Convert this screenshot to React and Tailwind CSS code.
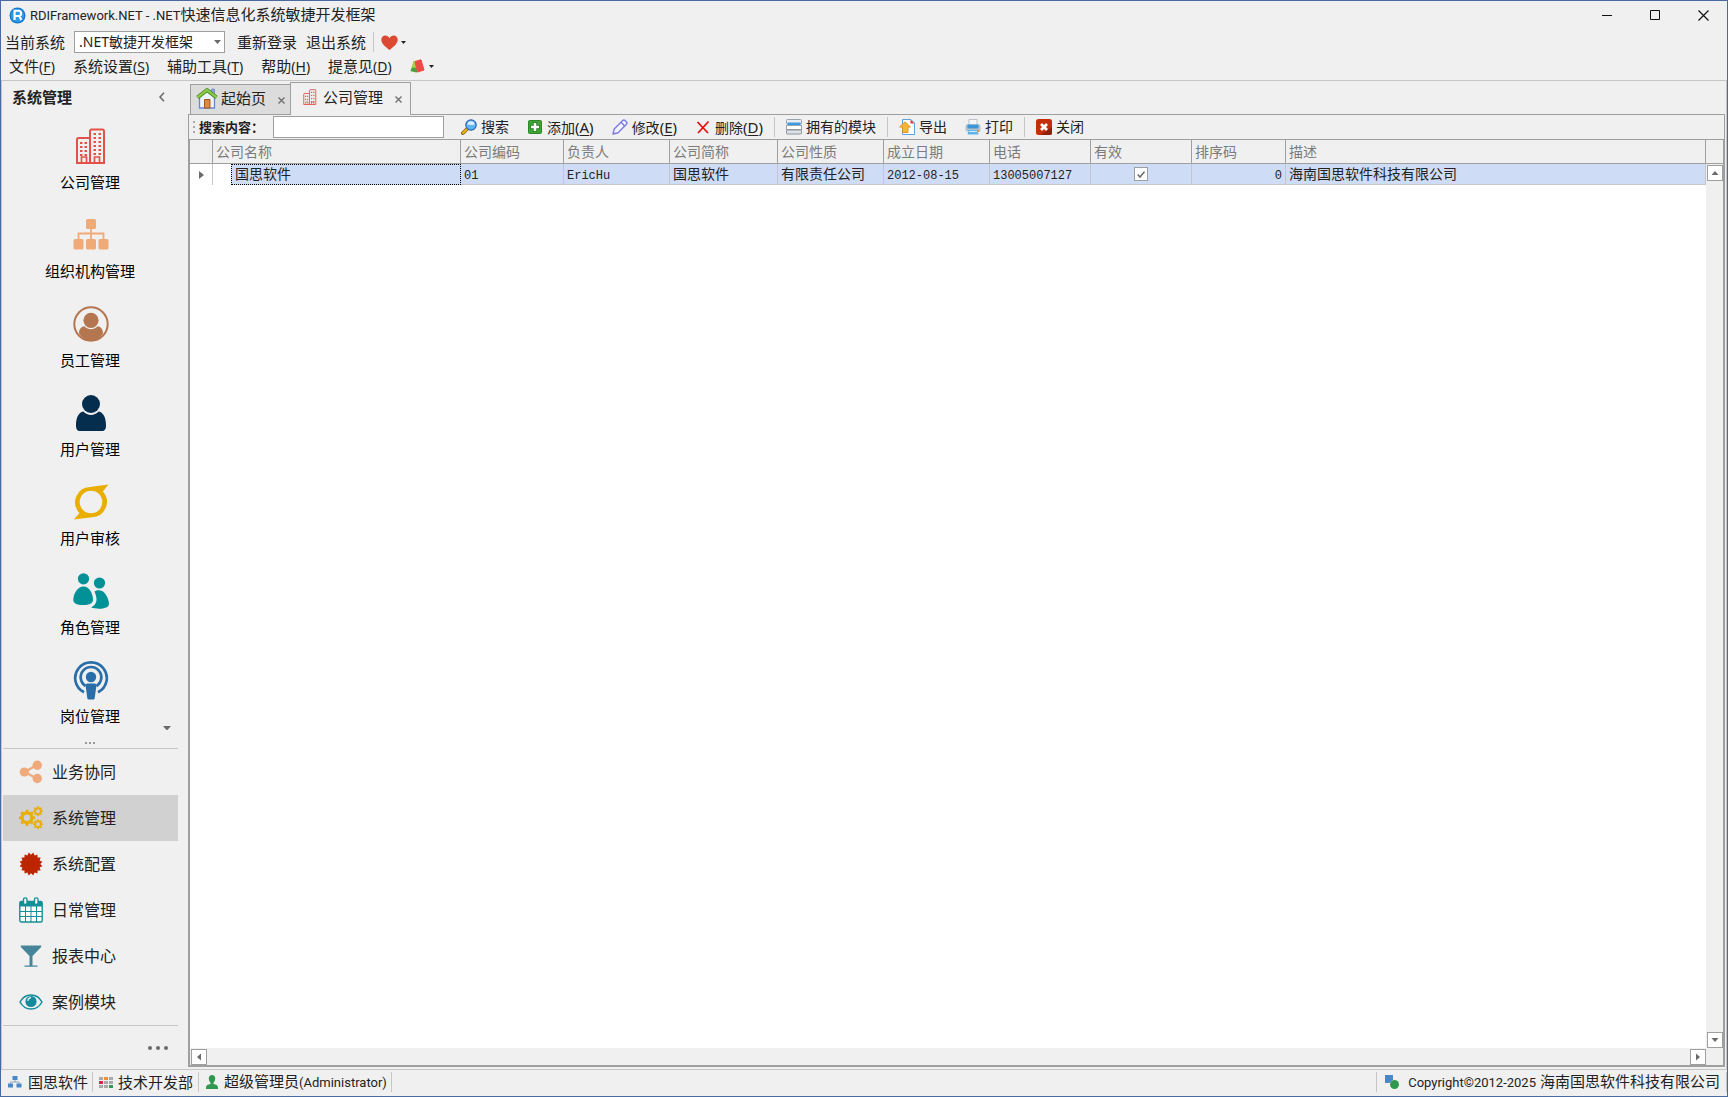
import React from "react";

/* ---------- small shared pieces ---------- */

function Caret({ width = 5, className = "" }) {
  return (
    <svg width={width} height={(width + 1) / 2} viewBox="0 0 6 4" preserveAspectRatio="none" className={"shrink-0 " + className} fill="currentColor">
      <path d="M0 0h6L3 4z" />
    </svg>
  );
}

function Sep({ className = "" }) {
  return <span className={"w-px shrink-0 bg-[#c6c6c6] " + className} />;
}

function Key({ letter, className = "text-sm" }) {
  return (
    <span className={className}>
      (<span className="underline underline-offset-2">{letter}</span>)
    </span>
  );
}

/* ---------- icons ---------- */

function LogoIcon() {
  return (
    <svg width="17" height="17" viewBox="0 0 17 17" className="shrink-0">
      <circle cx="8.5" cy="8.5" r="8" fill="#1479c8" />
      <circle cx="8.5" cy="8.5" r="6.6" fill="#2f9be6" />
      <path d="M5.6 13V3.8h3.7a2.6 2.6 0 0 1 .9 5.1l2.1 4.1M5.6 9h3.6" fill="none" stroke="#fff" strokeWidth="2.1" />
    </svg>
  );
}

function BuildingIcon({ size = 36 }) {
  const small = size < 20;
  const dots = [];
  const leftRows = small ? [15, 22] : [14, 18, 22, 26];
  const rightRows = small ? [6, 13, 20, 27] : [5, 9, 13, 17, 21, 25];
  for (const y of leftRows) for (const x of [7, 11.5]) dots.push([x, y]);
  for (const y of rightRows) for (const x of [20.5, 25.5]) dots.push([x, y]);
  return (
    <svg width={size} height={size} viewBox="0 0 36 36" className="shrink-0">
      <g fill="none" stroke="#e55048" strokeWidth="2">
        <path d="M17 10H5.500A1.500 1.500 0 0 0 4 11.500V35h27V3a1.500 1.500 0 0 0-1.500-1.500h-11A1.500 1.500 0 0 0 17 3v32" />
        <path d="M8.500 35v-6h5v6M21.500 35v-6h5v6" strokeWidth="1.700" />
      </g>
      {dots.map(([x, y]) => (
        <rect key={x + "-" + y} x={x} y={y} width="2.500" height={small ? 3 : 2} fill="#e55048" />
      ))}
    </svg>
  );
}

function OrgIcon() {
  return (
    <svg width="36" height="36" viewBox="0 0 36 36">
      <g fill="#efaa78">
        <rect x="13" y="2" width="10" height="10" rx="1.500" />
        <rect x="0.500" y="22" width="10" height="10.500" rx="1.500" />
        <rect x="13" y="22" width="10" height="10.500" rx="1.500" />
        <rect x="25.500" y="22" width="10" height="10.500" rx="1.500" />
      </g>
      <path d="M18 12v10M5.500 22v-5.500h25V22" fill="none" stroke="#efaa78" strokeWidth="1.800" />
    </svg>
  );
}

function EmployeeIcon() {
  return (
    <svg width="36" height="36" viewBox="0 0 36 36">
      <circle cx="18" cy="18" r="16.700" fill="none" stroke="#b4764f" strokeWidth="2" />
      <circle cx="18" cy="14.300" r="7.600" fill="#b4764f" />
      <path d="M6 27.500c0-4 2-7 5.300-7.300 4 4 9.400 4 13.400 0 3.300.3 5.300 3.300 5.300 7.300A16.500 16.500 0 0 1 18 35 16.500 16.500 0 0 1 6 27.500z" fill="#b4764f" />
    </svg>
  );
}

function UserIcon() {
  return (
    <svg width="36" height="38" viewBox="0 0 36 38">
      <circle cx="18" cy="10" r="9" fill="#042d4e" />
      <path d="M10.300 17.500c4.300 4.600 11.100 4.600 15.400 0C30.600 18.500 33 24 33 31.500c0 4-1.500 5.500-4 5.500H7c-2.500 0-4-1.500-4-5.500 0-7.500 2.400-13 7.300-14z" fill="#042d4e" />
    </svg>
  );
}

function AuditIcon() {
  return (
    <svg width="36" height="36" viewBox="0 0 36 36">
      <path
        fillRule="evenodd"
        fill="#e9ae00"
        d="M35.500.5 29.800 7.500A15.300 15.300 0 0 1 19 33.200L.8 35.500 6.500 29A15.300 15.300 0 0 1 17 3zM18 6.700a11.300 11.300 0 1 0 0 22.600 11.300 11.300 0 0 0 0-22.600z"
      />
    </svg>
  );
}

function RoleIcon() {
  return (
    <svg width="36" height="36" viewBox="0 0 36 36" fill="#029196">
      <circle cx="10.500" cy="5.800" r="5.600" />
      <circle cx="26.500" cy="10" r="5.600" />
      <path d="M10.500 13.500c6 0 9.500 7.500 9.500 13.500 0 3-3.500 5-10 5S.3 30 .3 27c0-6 4.200-13.500 10.200-13.500z" />
      <path d="M21.500 18.500c3-2.200 8-1.700 10.500 2 2.500 3.300 4 7.500 4 10.500 0 5-11.500 6-18 3.300 5-2 7.500-7 3.500-15.800z" />
    </svg>
  );
}

function PostIcon() {
  return (
    <svg width="36" height="40" viewBox="0 0 36 40">
      <g fill="none" stroke="#296da9" strokeWidth="2.700">
        <path d="M11 32.300a15.800 15.800 0 1 1 14 0" />
        <path d="M12.500 26a10.300 10.300 0 1 1 11 0" />
      </g>
      <circle cx="18" cy="17" r="5.200" fill="#296da9" />
      <path d="M14.500 23.500h7c1.500 0 2 1 1.900 2.500L21.700 38c-.2 1.200-.7 1.600-1.700 1.600h-4c-1 0-1.500-.4-1.700-1.600L12.600 26c-.1-1.500.4-2.500 1.900-2.500z" fill="#296da9" />
    </svg>
  );
}

function ShareIcon() {
  return (
    <svg width="24" height="24" viewBox="0 0 24 24" fill="#efa97b">
      <circle cx="5.300" cy="12" r="4.600" />
      <circle cx="18.300" cy="5.200" r="4.700" />
      <circle cx="18.300" cy="18.500" r="4.700" />
      <path d="M18 5 5.500 12 18 18.500" fill="none" stroke="#efa97b" strokeWidth="2.200" />
    </svg>
  );
}

function Gear({ cx, cy, hole, inner, outer }) {
  const pts = [];
  for (let i = 0; i < 8; i++) {
    for (const [off, r] of [[-0.3, inner], [-0.2, outer], [0.2, outer], [0.3, inner]]) {
      const a = ((i + off) * Math.PI) / 4;
      pts.push((cx + r * Math.cos(a)).toFixed(2) + " " + (cy + r * Math.sin(a)).toFixed(2));
    }
  }
  const ring =
    "M" + (cx - hole) + " " + cy + "a" + hole + " " + hole + " 0 1 0 " + 2 * hole + " 0a" + hole + " " + hole + " 0 1 0 " + -2 * hole + " 0z";
  return <path fillRule="evenodd" fill="#e8ae09" d={"M" + pts.join("L") + "z" + ring} />;
}

function GearsIcon() {
  return (
    <svg width="24" height="24" viewBox="0 0 24 24">
      <Gear cx={8} cy={11.800} hole={3.300} inner={6.500} outer={8.200} />
      <Gear cx={19} cy={5.200} hole={1.900} inner={3.900} outer={5} />
      <Gear cx={19} cy={18.200} hole={1.900} inner={3.900} outer={5} />
    </svg>
  );
}

function BurstIcon() {
  const pts = [];
  for (let i = 0; i < 32; i++) {
    const r = i % 2 ? 9.3 : 11.6;
    const a = (Math.PI * i) / 16 + Math.PI / 16;
    pts.push((12 + r * Math.sin(a)).toFixed(1) + "," + (12 - r * Math.cos(a)).toFixed(1));
  }
  return (
    <svg width="24" height="24" viewBox="0 0 24 24">
      <polygon points={pts.join(" ")} fill="#bd2500" />
    </svg>
  );
}

function CalendarIcon() {
  return (
    <svg width="24" height="26" viewBox="0 0 24 26">
      <rect x="0.800" y="4.500" width="22.400" height="20.500" rx="1.500" fill="#fff" stroke="#138f96" strokeWidth="1.400" />
      <path d="M1 5h22v4.500H1z" fill="#138f96" />
      <path d="M1 14.500h22M1 19.500h22M6.500 9v16M12 9v16M17.500 9v16" stroke="#138f96" strokeWidth="1" />
      <rect x="4.500" y="0.800" width="3.500" height="6.500" rx="1.500" fill="#f0f0f0" stroke="#138f96" strokeWidth="1.300" />
      <rect x="15.500" y="0.800" width="3.500" height="6.500" rx="1.500" fill="#f0f0f0" stroke="#138f96" strokeWidth="1.300" />
    </svg>
  );
}

function GlassIcon() {
  return (
    <svg width="24" height="24" viewBox="0 0 24 24">
      <path d="M1.800 1.500h20.400V3L13.500 12v9.500h5v1.300h-13v-1.300h5V12L1.800 3z" fill="#468599" />
    </svg>
  );
}

function EyeIcon() {
  return (
    <svg width="24" height="16" viewBox="0 0 24 16">
      <path d="M1 8C6-1.300 18-1.300 23 8 18 17.300 6 17.300 1 8z" fill="#f0f0f0" stroke="#138b9c" strokeWidth="1.500" />
      <circle cx="12" cy="7.500" r="5.600" fill="#138b9c" />
      <path d="M8.800 6.800c.3-2 1.400-3 3.200-3.300" fill="none" stroke="#d8edf0" strokeWidth="1.300" />
    </svg>
  );
}

function HomeIcon() {
  return (
    <svg width="22" height="22" viewBox="0 0 22 22" className="shrink-0">
      <path d="M15.500 2h3v6h-3z" fill="#8ba3de" stroke="#5b78c4" strokeWidth=".6" />
      <path d="M3.500 10 11 4l7.500 6v11h-15z" fill="#eef4fd" stroke="#6d86cc" strokeWidth="1.300" />
      <path d="M8.500 12.500h5.500V21H8.500z" fill="#e08b3c" stroke="#a6541b" strokeWidth="1" />
      <path d="M1.500 10.500 11 3l9.500 7.500" fill="none" stroke="#4c8a1c" strokeWidth="4" strokeLinejoin="round" />
      <path d="M1.500 10.300 11 2.800l9.500 7.500" fill="none" stroke="#8ccb4a" strokeWidth="2.200" strokeLinejoin="round" />
    </svg>
  );
}

function SearchIcon() {
  return (
    <svg width="16" height="16" viewBox="0 0 16 16">
      <path d="M6 10 1.800 14.200" stroke="#8a6400" strokeWidth="3.600" strokeLinecap="round" />
      <path d="M6 10 2 14" stroke="#e8b31c" strokeWidth="2.200" strokeLinecap="round" />
      <circle cx="10" cy="6" r="5.200" fill="#5fb6f7" stroke="#2b62b4" strokeWidth="1.200" />
      <path d="M6.500 6a3.500 3.500 0 0 1 7-.5c-2 1.300-4.500-.5-7 .5z" fill="#d6effe" />
    </svg>
  );
}

function AddIcon() {
  return (
    <svg width="16" height="16" viewBox="0 0 16 16">
      <rect x="1.500" y="1.500" width="13" height="13" rx="1" fill="#3da535" stroke="#2c8a26" />
      <path d="M8 3.500v9M3.500 8h9" stroke="#1e6f1b" strokeWidth="4.200" />
      <path d="M8 4v8M4 8h8" stroke="#fff" strokeWidth="2.600" />
    </svg>
  );
}

function PencilIcon() {
  return (
    <svg width="16" height="16" viewBox="0 0 16 16" fill="none" stroke="#7d7be0" strokeWidth="1.400" strokeLinejoin="round">
      <path d="M1 15l1.200-5L10.500 1.700a2 2 0 0 1 2.800 0l1 1a2 2 0 0 1 0 2.800L6 13.800z" fill="#f3f3ff" />
      <path d="M9 3.300l3.700 3.700" />
    </svg>
  );
}

function DeleteIcon() {
  return (
    <svg width="16" height="16" viewBox="0 0 16 16">
      <path d="M2.500 3 13 14M13.500 2.500 3 14" stroke="#e01212" strokeWidth="1.800" />
    </svg>
  );
}

function ModulesIcon() {
  return (
    <svg width="16" height="16" viewBox="0 0 16 16">
      <rect x="0.500" y="0.500" width="15" height="4.500" rx="1" fill="#e8edf1" stroke="#9aa3ab" />
      <rect x="1.500" y="3.500" width="13" height="3" fill="#3a9be0" />
      <rect x="0.500" y="6.500" width="15" height="4" fill="#fff" stroke="#9aa3ab" />
      <rect x="0.500" y="11" width="15" height="4" rx="1" fill="#dde2e6" stroke="#8a939b" />
    </svg>
  );
}

function ExportIcon() {
  return (
    <svg width="16" height="16" viewBox="0 0 16 16">
      <path d="M3.500.5H12L15.500 4v11.500h-12z" fill="#fff" stroke="#5aa3dc" />
      <path d="M11.500.5 15.500 4.500h-4z" fill="#e23c2c" />
      <path d="M6 2.800 11.500 8H9v5.500H3.500V8H.6z" fill="#f9b635" stroke="#d58a12" strokeWidth=".8" />
    </svg>
  );
}

function PrintIcon() {
  return (
    <svg width="16" height="16" viewBox="0 0 16 16">
      <path d="M4 .5h8V7H4z" fill="#f4f6f8" stroke="#aeb6bd" strokeWidth=".8" />
      <rect x="0.500" y="5.500" width="15" height="7" rx="1.500" fill="#b9c2c9" />
      <path d="M2.500 5.500h11v4h-11z" fill="#3d97d6" />
      <path d="M3.500 11h9l1 4.500h-11z" fill="#5db4e8" />
      <path d="M4 12.500h8" stroke="#d8eefa" />
      <circle cx="13.500" cy="12" r=".9" fill="#e8862a" />
    </svg>
  );
}

function CloseBoxIcon() {
  return (
    <svg width="16" height="16" viewBox="0 0 16 16">
      <rect width="16" height="16" rx="2.500" fill="#c52e0b" />
      <path d="M4.500 16h9A2.500 2.500 0 0 0 16 13.500V8z" fill="#8f1f08" />
      <path d="M5 5l6 6M11 5l-6 6" stroke="#fff" strokeWidth="2.800" />
    </svg>
  );
}

function TabX() {
  return (
    <svg width="7" height="7" viewBox="0 0 7 7">
      <path d="M.5.500l6 6M6.500.500l-6 6" stroke="#707070" strokeWidth="1.400" />
    </svg>
  );
}

/* ---------- header ---------- */

function TitleBar() {
  return (
    <header className="flex h-7 items-center pl-2">
      <LogoIcon />
      <h1 className="ml-1 flex items-baseline whitespace-pre leading-5">
        <span className="font-['Roboto'] text-[13px]">RDIFramework.NET - .NET</span>
        <span className="text-[15px]">快速信息化系统敏捷开发框架</span>
      </h1>
      <div className="ml-auto flex items-center">
        <button aria-label="最小化" className="flex h-7 w-12 items-center justify-center">
          <svg width="10" height="10" viewBox="0 0 10 10"><path d="M0 5.500h10" stroke="#111" /></svg>
        </button>
        <button aria-label="最大化" className="flex h-7 w-12 items-center justify-center">
          <svg width="10" height="10" viewBox="0 0 10 10"><path d="M.5.500h9v9h-9z" fill="none" stroke="#111" /></svg>
        </button>
        <button aria-label="关闭窗口" className="flex h-7 w-12 items-center justify-center">
          <svg width="11" height="11" viewBox="0 0 11 11"><path d="M.5.500l10 10M10.500.500l-10 10" stroke="#111" strokeWidth="1.200" /></svg>
        </button>
      </div>
    </header>
  );
}

function SystemBar() {
  return (
    <div className="flex h-[26px] items-center pl-1 text-[15px] leading-5">
      <label htmlFor="system">当前系统</label>
      <div className="relative ml-[9px] flex items-center">
        <select id="system" className="h-[22px] w-[151px] appearance-none border border-[#9f9f9f] bg-white pl-1 text-sm leading-5">
          <option>.NET敏捷开发框架</option>
        </select>
        <Caret width={7} className="pointer-events-none absolute right-1 text-[#6a6a6a]" />
      </div>
      <button className="ml-3">重新登录</button>
      <button className="ml-[9px]">退出系统</button>
      <Sep className="ml-[7px] h-5" />
      <button aria-label="收藏" className="ml-[7px] flex items-center gap-[3px]">
        <svg width="17" height="15" viewBox="0 0 17 15">
          <path d="M8.500 15C5 12 .3 9 .3 4.700.3 2.200 2 .5 4.300.5c1.800 0 3.300 1 4.200 2.700C9.400 1.500 10.900.5 12.700.5c2.300 0 4 1.700 4 4.200C16.700 9 12 12 8.500 15z" fill="#dc4a33" />
        </svg>
        <Caret />
      </button>
    </div>
  );
}

const MENUS = [
  ["文件", "F"],
  ["系统设置", "S"],
  ["辅助工具", "T"],
  ["帮助", "H"],
  ["提意见", "D"],
];

function MenuBar() {
  return (
    <nav className="flex h-[25px] items-center gap-[18px] pb-[3px] pl-2 text-[15px] leading-5">
      {MENUS.map(([t, k]) => (
        <button key={k} className="flex items-baseline">
          {t}
          <Key letter={k} />
        </button>
      ))}
      <button aria-label="皮肤" className="flex items-center gap-1">
        <svg width="15" height="14" viewBox="0 0 15 14">
          <path d="M3.500 1.500 9 5 6.500 13.500.5 12z" fill="#a3d24b" />
          <path d="M2 8.500 8 9l-1.500 4.500-6-1.500z" fill="#49a043" />
          <path d="M5 2.500 11 .8 14 11 7.500 13z" fill="#ee4a45" stroke="#ee4a45" strokeLinejoin="round" />
        </svg>
        <Caret />
      </button>
    </nav>
  );
}

/* ---------- sidebar ---------- */

const MODULES = [
  ["公司管理", BuildingIcon],
  ["组织机构管理", OrgIcon],
  ["员工管理", EmployeeIcon],
  ["用户管理", UserIcon],
  ["用户审核", AuditIcon],
  ["角色管理", RoleIcon],
  ["岗位管理", PostIcon],
];

const GROUPS = [
  ["业务协同", ShareIcon],
  ["系统管理", GearsIcon],
  ["系统配置", BurstIcon],
  ["日常管理", CalendarIcon],
  ["报表中心", GlassIcon],
  ["案例模块", EyeIcon],
];

function Sidebar() {
  return (
    <aside className="flex w-[187px] shrink-0 flex-col border-l border-[#c6c6c6] pr-[10px]">
      <div className="flex h-8 shrink-0 items-center justify-between pl-[10px] pr-[13px]">
        <h2 className="text-[15px] font-bold leading-5">系统管理</h2>
        <button aria-label="折叠">
          <svg width="6" height="10" viewBox="0 0 6 10"><path d="M5 .8 1 5l4 4.200" fill="none" stroke="#666" strokeWidth="1.500" /></svg>
        </button>
      </div>
      <div className="relative flex flex-1 flex-col overflow-hidden pt-[13px]">
        {MODULES.map(([label, Icon]) => (
          <button key={label} className="mb-[23px] flex shrink-0 flex-col items-center gap-[6px] text-[15px] leading-5 text-black">
            <span className="flex h-10 items-center pl-[2px]">
              <Icon />
            </span>
            {label}
          </button>
        ))}
        <Caret width={8} className="absolute bottom-[18px] right-[7px] text-[#6a6a6a]" />
        <span className="absolute bottom-1 left-1/2 flex -translate-x-1/2 gap-0.5">
          <i className="h-0.5 w-0.5 bg-[#999]" />
          <i className="h-0.5 w-0.5 bg-[#999]" />
          <i className="h-0.5 w-0.5 bg-[#999]" />
        </span>
      </div>
      <nav className="ml-px border-y border-[#c6c6c6]">
        {GROUPS.map(([label, Icon], i) => (
          <button
            key={label}
            className={"flex h-[46px] w-full items-center gap-[9px] pl-4 text-base leading-5 " + (i === 1 ? "bg-[#d1d1d1]" : "")}
          >
            <span className="flex w-6 justify-center">
              <Icon />
            </span>
            {label}
          </button>
        ))}
      </nav>
      <div className="flex h-[43px] items-center justify-end pr-[10px]">
        <button aria-label="更多" className="flex gap-1">
          <i className="h-1 w-1 rounded-full bg-[#6c6c6c]" />
          <i className="h-1 w-1 rounded-full bg-[#6c6c6c]" />
          <i className="h-1 w-1 rounded-full bg-[#6c6c6c]" />
        </button>
      </div>
    </aside>
  );
}

/* ---------- main area ---------- */

function Tabs() {
  return (
    <div className="flex h-[34px] items-end">
      <div className="w-[2px] self-stretch border-b border-[#9f9f9f]" />
      <div className="flex h-[31px] w-[100px] items-center border border-r-0 border-[#9f9f9f] bg-[#dcdcdc] px-[5px] pb-[3px]">
        <button className="flex items-center gap-[3px] text-[15px] leading-5">
          <HomeIcon />
          起始页
        </button>
        <button aria-label="关闭起始页" className="ml-auto pt-1"><TabX /></button>
      </div>
      <div className="flex h-[33px] w-[121px] items-center border border-b-0 border-[#9f9f9f] pb-1 pl-[11px] pr-2">
        <button className="flex items-center gap-[5px] text-[15px] leading-5">
          <BuildingIcon size={16} />
          公司管理
        </button>
        <button aria-label="关闭公司管理" className="ml-auto pt-1"><TabX /></button>
      </div>
      <div className="flex-1 self-stretch border-b border-[#9f9f9f]" />
    </div>
  );
}

function Tool({ icon: Icon, label, k }) {
  return (
    <button className="flex shrink-0 items-center gap-1 px-[9px] text-sm leading-5">
      <Icon />
      <span className="flex items-baseline">
        {label}
        {k && <Key letter={k} className="text-[15px]" />}
      </span>
    </button>
  );
}

function Toolbar() {
  return (
    <div className="flex h-[25px] items-center border-b border-[#9f9f9f] pl-1">
      <span className="flex flex-col gap-[3px]">
        <i className="h-0.5 w-0.5 bg-[#aaa]" />
        <i className="h-0.5 w-0.5 bg-[#aaa]" />
        <i className="h-0.5 w-0.5 bg-[#aaa]" />
      </span>
      <label htmlFor="query" className="ml-1 w-[74px] text-[13px] font-bold leading-5">搜索内容：</label>
      <input id="query" className="h-[22px] w-[171px] border border-[#9f9f9f] bg-white px-1 text-sm" />
      <div className="ml-2 flex items-center">
        <Tool icon={SearchIcon} label="搜索" />
        <Tool icon={AddIcon} label="添加" k="A" />
        <Tool icon={PencilIcon} label="修改" k="E" />
        <Tool icon={DeleteIcon} label="删除" k="D" />
        <Sep className="mx-0.5 h-5" />
        <Tool icon={ModulesIcon} label="拥有的模块" />
        <Sep className="mx-0.5 h-5" />
        <Tool icon={ExportIcon} label="导出" />
        <Tool icon={PrintIcon} label="打印" />
        <Sep className="mx-0.5 h-5" />
        <Tool icon={CloseBoxIcon} label="关闭" />
      </div>
    </div>
  );
}

function ScrollButton({ label, d, className = "" }) {
  return (
    <button aria-label={label} className={"flex h-4 w-4 shrink-0 items-center justify-center border border-[#9f9f9f] bg-white " + className}>
      <svg width="8" height="8" viewBox="0 0 8 8"><path d={d} fill="#6a6a6a" /></svg>
    </button>
  );
}

const HEADS = ["公司名称", "公司编码", "负责人", "公司简称", "公司性质", "成立日期", "电话", "有效", "排序码", "描述"];

function Mono({ children }) {
  return <span className="font-['Liberation_Mono','Noto_Sans_CJK_SC',monospace] text-xs leading-none">{children}</span>;
}

function CompanyTable() {
  const cell = "border-r border-b border-[#c6c6c6] px-[3px] py-0";
  return (
    <table className="w-full table-fixed border-separate border-spacing-0 whitespace-nowrap text-sm leading-5">
      <colgroup>
        <col className="w-[23px]" />
        <col className="w-[248px]" />
        <col className="w-[103px]" />
        <col className="w-[106px]" />
        <col className="w-[108px]" />
        <col className="w-[106px]" />
        <col className="w-[106px]" />
        <col className="w-[101px]" />
        <col className="w-[101px]" />
        <col className="w-[94px]" />
        <col />
      </colgroup>
      <thead>
        <tr className="h-6 bg-[#f0f0f0]">
          <th className="border-r border-b border-[#9f9f9f] p-0" />
          {HEADS.map((h) => (
            <th key={h} className="border-r border-b border-[#9f9f9f] px-[3px] py-0 text-left font-normal text-[#7b7b7b]">{h}</th>
          ))}
        </tr>
      </thead>
      <tbody>
        <tr className="h-[21px] bg-[#cfdcf5]">
          <td className="border-r border-[#c6c6c6] bg-white p-0">
            <svg width="5" height="8" viewBox="0 0 5 8" className="ml-[9px]"><path d="M0 0l5 4-5 4z" fill="#6a6a6a" /></svg>
          </td>
          <td className="bg-white p-0 pl-[18px]">
            <div className="h-[21px] border border-dotted border-black bg-[#cfdcf5] pl-[3px] leading-[18px]">国思软件</div>
          </td>
          <td className={cell}><Mono>01</Mono></td>
          <td className={cell}><Mono>EricHu</Mono></td>
          <td className={cell}>国思软件</td>
          <td className={cell}>有限责任公司</td>
          <td className={cell}><Mono>2012-08-15</Mono></td>
          <td className={cell}><Mono>13005007127</Mono></td>
          <td className={cell}>
            <span className="relative mx-auto flex h-[14px] w-[14px] items-center justify-center">
              <input type="checkbox" aria-label="有效" defaultChecked className="h-[14px] w-[14px] appearance-none border border-[#9f9f9f] bg-white" />
              <svg width="8" height="7" viewBox="0 0 8 7" className="pointer-events-none absolute"><path d="M.7 3.500 3 6 7.500.7" fill="none" stroke="#6a6a6a" strokeWidth="1.600" /></svg>
            </span>
          </td>
          <td className={cell + " text-right"}><Mono>0</Mono></td>
          <td className={cell}>海南国思软件科技有限公司</td>
        </tr>
      </tbody>
    </table>
  );
}

function DataGrid() {
  return (
    <div className="flex min-h-0 flex-1 flex-col border-r border-l border-[#9f9f9f]">
      <div className="flex min-h-0 flex-1">
        <div className="min-w-0 flex-1 overflow-hidden bg-white">
          <CompanyTable />
        </div>
        <div className="flex w-[17px] flex-col items-center bg-[#f0f0f0]">
          <div className="h-6 w-full shrink-0 border-b border-[#9f9f9f]" />
          <ScrollButton label="向上滚动" d="M4 2 7.500 6h-7z" className="mt-px" />
          <div className="flex-1" />
          <ScrollButton label="向下滚动" d="M4 6 .5 2h7z" />
        </div>
      </div>
      <div className="flex h-[17px] items-center pl-px pr-[17px]">
        <ScrollButton label="向左滚动" d="M2 4 6 .5v7z" />
        <div className="flex-1" />
        <ScrollButton label="向右滚动" d="M6 4 2 .5v7z" />
      </div>
    </div>
  );
}

/* ---------- status bar ---------- */

function StatusBar() {
  return (
    <footer className="flex h-[27px] items-center border-t border-[#c6c6c6] pb-0.5 pl-[7px] text-[15px] leading-5">
      <svg width="14" height="12" viewBox="0 0 14 12">
        <path d="M4.500 0h5v4h-5zM0 7.500h5v4H0zM8.500 7.500h5v4h-5z" fill="#4b86c6" />
        <path d="M7 4v2M2.500 7.500V6h8.500v1.500" fill="none" stroke="#8aa4bf" />
      </svg>
      <span className="ml-[6px]">国思软件</span>
      <Sep className="ml-1 h-5" />
      <svg width="14" height="11" viewBox="0 0 14 11" className="ml-[6px]">
        <path d="M0 0h4v3H0zM10 0h4v3h-4zM5 4h4v3H5zM10 4h4v3h-4zM0 8h4v3H0zM5 8h4v3H5z" fill="#a9a9a9" />
        <path d="M5 0h4v3H5z" fill="#ec8e3c" />
        <path d="M0 4h4v3H0z" fill="#d12c44" />
        <path d="M10 8h4v3h-4z" fill="#3a9956" />
      </svg>
      <span className="ml-[5px]">技术开发部</span>
      <Sep className="ml-[5px] h-5" />
      <svg width="12" height="14" viewBox="0 0 12 14" className="ml-[7px]" fill="#33984f">
        <path d="M6 0c2 0 3.200 1.400 3.200 3.500C9.200 6 7.800 8 6 8S2.800 6 2.800 3.500C2.800 1.400 4 0 6 0z" />
        <path d="M4.500 7h3v2c2.800.3 4.500 1.500 4.500 3.500V14H0v-1.500C0 10.500 1.700 9.300 4.500 9z" />
      </svg>
      <span className="ml-[6px] flex items-baseline">
        超级管理员<span className="font-['Roboto'] text-[13px]">(Administrator)</span>
      </span>
      <Sep className="ml-1 h-5" />
      <div className="ml-auto flex items-center">
        <Sep className="h-5" />
        <svg width="14" height="14" viewBox="0 0 14 14" className="ml-2">
          <path d="M0 0h8v4.500L4.500 8H0z" fill="#4b86c6" />
          <circle cx="9.500" cy="9.500" r="4.500" fill="#33984f" />
        </svg>
        <span className="ml-[9px] flex items-baseline gap-1">
          <span className="font-['Roboto'] text-[13px]">Copyright©2012-2025</span>
          <span>海南国思软件科技有限公司</span>
        </span>
        <Sep className="ml-[6px] h-5" />
      </div>
    </footer>
  );
}

export default function App() {
  return (
    <div className="flex h-screen w-full flex-col overflow-hidden border border-[#4a6b9f] bg-[#f0f0f0] font-['Noto_Sans','Noto_Sans_CJK_SC',sans-serif] text-[#222]">
      <TitleBar />
      <SystemBar />
      <MenuBar />
      <div className="flex min-h-0 flex-1 border-t border-r border-[#c6c6c6]">
        <Sidebar />
        <main className="flex min-w-0 flex-1 flex-col pb-0.5 pr-px">
          <Tabs />
          <div className="flex min-h-0 flex-1 flex-col border border-t-0 border-[#9f9f9f]">
            <Toolbar />
            <DataGrid />
            <div className="h-px bg-[#9f9f9f]" />
          </div>
        </main>
      </div>
      <StatusBar />
    </div>
  );
}
